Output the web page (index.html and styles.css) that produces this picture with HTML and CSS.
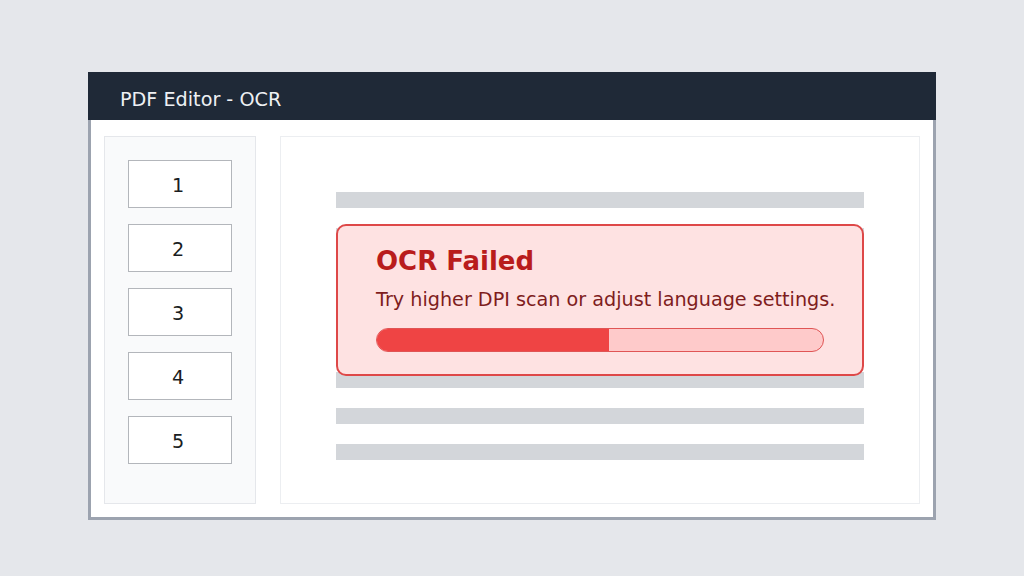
FILE: index.html
```html
<!DOCTYPE html>
<html lang="en">
<head>
<meta charset="utf-8">
<title>PDF Editor - OCR</title>
<link rel="stylesheet" href="styles.css">
</head>
<body>
<div class="window">
  <div class="titlebar">PDF Editor - OCR</div>
  <div class="content">
    <aside class="sidebar">
      <div class="thumb">1</div>
      <div class="thumb">2</div>
      <div class="thumb">3</div>
      <div class="thumb">4</div>
      <div class="thumb">5</div>
    </aside>
    <main class="page">
      <div class="text-area">
        <div class="line"></div>
        <div class="line"></div>
        <div class="line"></div>
        <div class="line"></div>
        <div class="line"></div>
        <div class="line"></div>
        <div class="line"></div>
        <div class="line"></div>
        <div class="alert">
          <h1 class="alert-title">OCR Failed</h1>
          <p class="alert-msg">Try higher DPI scan or adjust language settings.</p>
          <div class="progress"><div class="progress-fill" style="width:52%"></div></div>
        </div>
      </div>
    </main>
  </div>
</div>
</body>
</html>
```
FILE: styles.css
```css
html, body {
  margin: 0;
  padding: 0;
}
body {
  background: #e5e7eb;
  font-family: "DejaVu Sans", "Liberation Sans", sans-serif;
  width: 1024px;
  height: 576px;
  overflow: hidden;
}
.window {
  width: 848px;
  margin: 72px auto 0;
}
.titlebar {
  height: 48px;
  background: #1f2937;
  color: #eef0f3;
  font-size: 19.2px;
  display: flex;
  align-items: center;
  padding: 6px 0 0 32px;
  box-sizing: border-box;
}
.content {
  height: 400px;
  box-sizing: border-box;
  background: #ffffff;
  border: 3px solid #9ca3af;
  border-top: none;
  padding: 16px 13px 13px 13px;
  display: flex;
  gap: 24px;
}
.sidebar {
  width: 152px;
  box-sizing: border-box;
  background: #f9fafb;
  border: 1px solid #e5e7eb;
  padding: 23px;
  display: flex;
  flex-direction: column;
  gap: 16px;
}
.thumb {
  width: 104px;
  height: 48px;
  box-sizing: border-box;
  background: #ffffff;
  border: 1px solid #b3b6bb;
  display: flex;
  align-items: center;
  justify-content: center;
  padding: 2px 4px 0 0;
  font-size: 19.2px;
  color: #1a1d22;
}
.page {
  flex: 1;
  box-sizing: border-box;
  background: #ffffff;
  border: 1px solid #eceef1;
  padding: 55px;
}
.text-area {
  position: relative;
  display: flex;
  flex-direction: column;
  gap: 20px;
}
.line {
  height: 16px;
  background: #d3d6da;
}
.alert {
  position: absolute;
  top: 32px;
  left: 0;
  right: 0;
  box-sizing: border-box;
  background: #fee2e2;
  border: 2px solid #de4848;
  border-radius: 10px;
  padding: 20px 38px 22px;
}
.alert-title {
  margin: 0;
  font-size: 26px;
  font-weight: bold;
  color: #b91c1c;
  line-height: normal;
}
.alert-msg {
  margin: 12px 0 0;
  font-size: 19.2px;
  color: #7f1d1d;
  line-height: normal;
  white-space: nowrap;
}
.progress {
  margin-top: 17px;
  height: 24px;
  box-sizing: border-box;
  background: #fecaca;
  border: 1px solid #e05555;
  border-radius: 12px;
  overflow: hidden;
}
.progress-fill {
  height: 100%;
  background: #ef4444;
}
```
